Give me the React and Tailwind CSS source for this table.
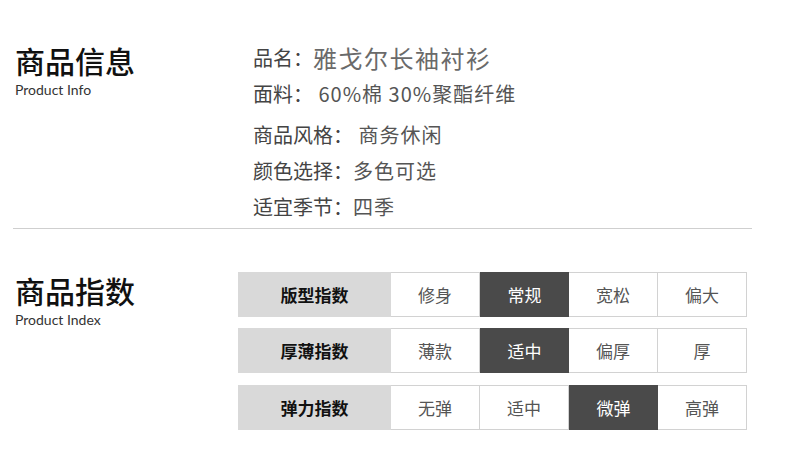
const CJK = { fontFamily: '"Noto Sans CJK SC", "Noto Sans", sans-serif' };

const INFO = [
  { label: "品名：", value: "雅戈尔长袖衬衫", big: true },
  { label: "面料：", value: " 60%棉 30%聚酯纤维" },
  { label: "商品风格：", value: " 商务休闲", gap: true },
  { label: "颜色选择：", value: "多色可选" },
  { label: "适宜季节：", value: "四季" },
];

const INDEX = [
  { name: "版型指数", opts: ["修身", "常规", "宽松", "偏大"], active: 1 },
  { name: "厚薄指数", opts: ["薄款", "适中", "偏厚", "厚"], active: 1 },
  { name: "弹力指数", opts: ["无弹", "适中", "微弹", "高弹"], active: 2 },
];

// ─── Left-side heading ───────────────────────────────────────────────────────
function Heading({ title, sub, top }) {
  return (
    <div className={`w-[238px] pl-[15px] ${top}`}>
      <p className="text-[30px] leading-[36px] font-medium text-[#111]">{title}</p>
      <p
        className="mt-[4px] text-[14px] leading-[16px] text-[#333]"
        style={{ fontFamily: 'Lato, "Noto Sans", sans-serif' }}
      >
        {sub}
      </p>
    </div>
  );
}

export default function App() {
  return (
    <div className="w-[790px] h-[462px] bg-white overflow-hidden" style={CJK}>
      {/* ── Product info ── */}
      <div className="flex pt-[40px]">
        <Heading title="商品信息" sub="Product Info" top="pt-[2px]" />
        <div className="pl-[15px]">
          {INFO.map((row) => (
            <div
              key={row.label}
              className={`h-[36px] flex items-center whitespace-pre ${row.gap ? "mt-[5px]" : ""}`}
            >
              <span className="text-[20px] text-[#444]">{row.label}</span>
              {row.big ? (
                <span className="text-[24px] tracking-[1.5px] text-[#6a6a6a]">{row.value}</span>
              ) : (
                <span className="text-[20px] tracking-[1px] text-[#555]">{row.value}</span>
              )}
            </div>
          ))}
        </div>
      </div>

      <div className="ml-[13px] mt-[3px] w-[739px] h-px bg-[#cfcfcf]" />

      {/* ── Product index ── */}
      <div className="flex">
        <Heading title="商品指数" sub="Product Index" top="pt-[43px]" />
        <div className="pt-[43px]">
          {INDEX.map((row, i) => (
            <div
              key={row.name}
              className={`flex h-[45px] ${i === 1 ? "mt-[11px]" : i === 2 ? "mt-[12px]" : ""}`}
            >
              <div className="w-[153px] bg-[#d9d9d9] flex items-center justify-center text-[17px] font-bold text-[#111]">
                {row.name}
              </div>
              {row.opts.map((o, j) =>
                j === row.active ? (
                  <div
                    key={j}
                    className="w-[89px] bg-[#4a4a4a] flex items-center justify-center text-[17px] text-white"
                  >
                    {o}
                  </div>
                ) : (
                  <div
                    key={j}
                    className="w-[89px] border-y border-r border-[#d2d2d2] flex items-center justify-center text-[17px] text-[#555]"
                  >
                    {o}
                  </div>
                )
              )}
            </div>
          ))}
        </div>
      </div>
    </div>
  );
}
